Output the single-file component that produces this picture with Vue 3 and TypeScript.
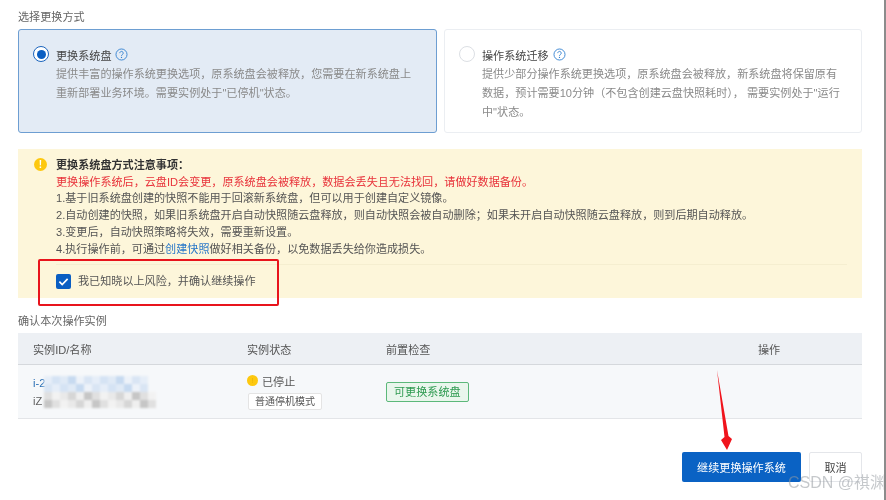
<template>
  <div class="page">
    <div class="section-title">选择更换方式</div>
    <div class="options">
      <div v-for="opt in options" :key="opt.title" class="option" :class="{ active: opt.active }">
        <span class="radio"><i v-if="opt.active"></i></span>
        <div class="option-body">
          <div class="option-title">
            {{ opt.title }}
            <svg class="help" viewBox="0 0 16 16" width="13" height="13">
              <circle cx="8" cy="8" r="6.8" fill="none" stroke="#2f7fd0" stroke-width="1.1" />
              <path d="M5.9 6.3a2.1 2.1 0 1 1 3.3 1.7c-.8.5-1.2.9-1.2 1.7" fill="none" stroke="#2f7fd0" stroke-width="1.1" />
              <circle cx="8" cy="11.6" r=".8" fill="#2f7fd0" />
            </svg>
          </div>
          <p>{{ opt.desc }}</p>
        </div>
      </div>
    </div>

    <div class="notice">
      <span class="notice-icon">!</span>
      <div class="notice-body">
        <div class="notice-title">更换系统盘方式注意事项：</div>
        <div class="danger">更换操作系统后，云盘ID会变更，原系统盘会被释放，数据会丢失且无法找回，请做好数据备份。</div>
        <div>1.基于旧系统盘创建的快照不能用于回滚新系统盘，但可以用于创建自定义镜像。</div>
        <div>2.自动创建的快照，如果旧系统盘开启自动快照随云盘释放，则自动快照会被自动删除；如果未开启自动快照随云盘释放，则到后期自动释放。</div>
        <div>3.变更后，自动快照策略将失效，需要重新设置。</div>
        <div>4.执行操作前，可通过<a>创建快照</a>做好相关备份，以免数据丢失给你造成损失。</div>
        <div class="confirm">
          <span class="checkbox">
            <svg viewBox="0 0 16 16" width="15" height="15">
              <path d="M3.6 8.2l3 3 5.8-6" fill="none" stroke="#fff" stroke-width="1.8" />
            </svg>
          </span>
          我已知晓以上风险，并确认继续操作
        </div>
      </div>
      <div class="highlight"></div>
    </div>

    <div class="section-title second">确认本次操作实例</div>
    <div class="table">
      <div class="row head">
        <div>实例ID/名称</div>
        <div>实例状态</div>
        <div>前置检查</div>
        <div>操作</div>
      </div>
      <div class="row body">
        <div class="instance">
          <a>i-2</a>
          <span>iZ</span>
          <svg class="mosaic" width="112" height="32">
            <rect v-for="(m, i) in mosaic" :key="i" :x="m.x" :y="m.y" width="8" height="8" :fill="m.fill" />
          </svg>
        </div>
        <div class="status">
          <div class="state"><span class="dot">!</span>已停止</div>
          <span class="mode">普通停机模式</span>
        </div>
        <div><span class="tag">可更换系统盘</span></div>
        <div></div>
      </div>
    </div>

    <div class="actions">
      <button class="primary">继续更换操作系统</button>
      <button class="cancel">取消</button>
    </div>

    <svg class="arrow" width="24" height="84" viewBox="0 0 24 84">
      <path d="M1 0L8.500 67 5 70 11 80 16 69 12.500 66z" fill="#f0141c" />
    </svg>
    <div class="watermark">CSDN @祺渊</div>
    <div class="edge"></div>
  </div>
</template>

<script setup lang="ts">
const options = [
  {
    title: '更换系统盘',
    desc: '提供丰富的操作系统更换选项，原系统盘会被释放，您需要在新系统盘上重新部署业务环境。需要实例处于"已停机"状态。',
    active: true,
  },
  {
    title: '操作系统迁移',
    desc: '提供少部分操作系统更换选项，原系统盘会被释放，新系统盘将保留原有数据，预计需要10分钟（不包含创建云盘快照耗时）， 需要实例处于"运行中"状态。',
    active: false,
  },
]

const topColors = ['#e6eef8', '#d5e3f4', '#e0eaf6', '#c7daf0', '#edf2f9', '#d9e5f4']
const bottomColors = ['#e9e9e9', '#d6d6d6', '#efefef', '#c6c6c6', '#e0e0e0', '#f2f2f2']
// the last cell of the two upper rows stays empty, the blurred id is shorter than the name
const mosaic = Array.from({ length: 56 }, (_, i) => {
  const y = Math.floor(i / 14)
  const colors = y < 2 ? topColors : bottomColors
  const empty = y < 2 && i % 14 === 13
  return { x: (i % 14) * 8, y: y * 8, fill: empty ? 'transparent' : colors[(i * 7 + y * 3) % 6] }
})
</script>

<style scoped>
.page {
  position: relative;
  width: 886px;
  height: 500px;
  box-sizing: border-box;
  padding: 9px 24px 0 18px;
  overflow: hidden;
  background: #fff;
  font-family: "Liberation Sans", "Noto Sans CJK SC", sans-serif;
  font-size: 11.1px;
  color: #5e5e5e;
  filter: blur(0.35px);
}

.section-title {
  height: 20px;
  line-height: 16px;
  color: #666;
}

.section-title.second {
  height: 20px;
  line-height: 16px;
  margin-top: 15px;
}

.options {
  display: grid;
  grid-template-columns: 419px 418px;
  gap: 7px;
}

.option {
  display: flex;
  height: 104px;
  box-sizing: border-box;
  padding: 16px 15px 0 14px;
  border: 1px solid #ebeef2;
  border-radius: 3px;
}

.option.active {
  background: #e3ebf5;
  border-color: #6d9ed2;
}

.radio {
  flex: none;
  display: flex;
  align-items: center;
  justify-content: center;
  width: 14px;
  height: 14px;
  margin-right: 7px;
  border: 1px solid #dcdfe4;
  border-radius: 50%;
  background: #fff;
}

.active .radio {
  border-color: #1b64bd;
}

.radio i {
  width: 9px;
  height: 9px;
  border-radius: 50%;
  background: #0a5ec2;
}

.option-title {
  display: flex;
  align-items: center;
  gap: 4px;
  height: 17px;
  margin-bottom: 2px;
  color: #444;
}

.option-body p {
  margin: 0;
  line-height: 19px;
  color: #8a8a8a;
}

.notice {
  position: relative;
  display: flex;
  height: 149px;
  box-sizing: border-box;
  margin-top: 16px;
  padding: 8px 15px 0 15px;
  background: #fdf6da;
  line-height: 16.7px;
  color: #555;
}

.notice-icon {
  flex: none;
  width: 13px;
  height: 13px;
  margin: 1px 9px 0 1px;
  border-radius: 50%;
  background: #fdc80f;
  color: #fff;
  font-size: 10px;
  font-weight: 700;
  line-height: 13px;
  text-align: center;
}

.notice-body {
  flex: 1;
}

.notice-title {
  font-weight: 700;
  color: #333;
}

.danger {
  color: #e8323a;
}

.notice a {
  color: #2a78c8;
}

.confirm {
  display: flex;
  align-items: center;
  gap: 7px;
  height: 34px;
  margin-top: 7px;
  border-top: 1px solid #f5eed0;
  box-sizing: border-box;
}

.checkbox {
  display: flex;
  align-items: center;
  justify-content: center;
  width: 15px;
  height: 15px;
  border-radius: 2px;
  background: #0a5ec2;
}

.highlight {
  position: absolute;
  left: 20px;
  top: 110px;
  width: 237px;
  height: 43px;
  border: 2.500px solid #e8141c;
  border-radius: 2px;
}

.table {
  border-bottom: 1px solid #e3e5e8;
}

.row {
  display: grid;
  grid-template-columns: 229px 139px 372px 104px;
}

.row > div:first-child {
  padding-left: 15px;
}

.head {
  height: 32px;
  align-items: center;
  background: #edf0f4;
  border-bottom: 1px solid #d5d8dc;
  box-sizing: border-box;
  color: #555;
}

.body {
  height: 53px;
  align-items: center;
  background: #f6f8fa;
}

.instance {
  position: relative;
  display: flex;
  flex-direction: column;
  line-height: 18px;
}

.instance a {
  color: #2a6fb5;
}

.mosaic {
  position: absolute;
  left: 26px;
  top: 2px;
  filter: blur(1px);
}

.status {
  padding-bottom: 1px;
}

.status .state {
  display: flex;
  align-items: center;
  gap: 4px;
  height: 16px;
  margin-bottom: 4px;
  color: #555;
}

.dot {
  width: 11px;
  height: 11px;
  border-radius: 50%;
  background: #fdc80f;
  color: #e9b10a;
  font-size: 8px;
  line-height: 11px;
  text-align: center;
}

.mode {
  display: inline-block;
  margin-left: 1px;
  padding: 0 6px;
  height: 15px;
  line-height: 15px;
  font-size: 10px;
  background: #fff;
  border: 1px solid #e4e4e4;
  border-radius: 2px;
  color: #555;
}

.tag {
  display: inline-block;
  height: 18px;
  padding: 0 7px;
  line-height: 18px;
  background: #e9f6ec;
  border: 1px solid #5cb87a;
  border-radius: 2px;
  color: #2e9a50;
}

.actions {
  display: flex;
  justify-content: flex-end;
  gap: 8px;
  margin-top: 33px;
}

.actions button {
  height: 30px;
  border-radius: 2px;
  font: inherit;
}

.primary {
  width: 119px;
  border: none;
  background: #0a62c4;
  color: #fff;
}

.cancel {
  width: 53px;
  border: 1px solid #e4e6ea;
  background: #fff;
  color: #444;
}

.arrow {
  position: absolute;
  left: 716px;
  top: 370px;
}

.watermark {
  position: absolute;
  left: 788px;
  top: 474px;
  font-size: 16px;
  line-height: 18px;
  white-space: nowrap;
  color: rgba(150, 155, 160, 0.55);
}

.edge {
  position: absolute;
  top: 0;
  right: 0;
  width: 2px;
  height: 100%;
  background: #8c8c8c;
}
</style>
